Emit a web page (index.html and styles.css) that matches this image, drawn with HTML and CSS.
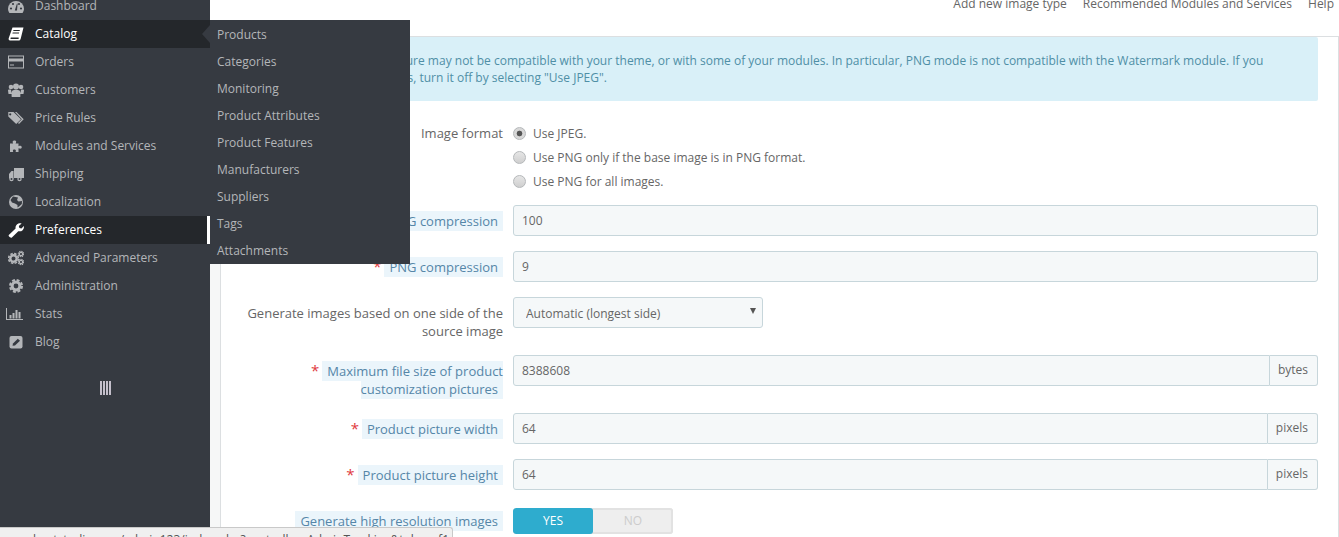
FILE: index.html
```html
<!DOCTYPE html>
<html lang="en">
<head>
<meta charset="utf-8">
<title>Image settings</title>
<link rel="stylesheet" href="styles.css">
</head>
<body>
<div class="page">
  <aside class="sidebar">
    <ul class="menu">
      <li class="item"><svg class="ico" viewBox="0 0 16 16"><path d="M0 11A8 8 0 0 1 16 11 8 8 0 0 1 14.6 15H1.4A8 8 0 0 1 0 11Z"/><g class="hole"><circle cx="3" cy="10.5" r="1.1"/><circle cx="5" cy="6" r="1.1"/><circle cx="11" cy="6" r="1.1"/><circle cx="13" cy="10.5" r="1.1"/><path d="M6.8 12.5 9 5.5 9.6 5.7 9 12.5Z"/></g></svg><span>Dashboard</span></li>
      <li class="item active catalog"><svg class="ico" viewBox="0 0 16 16"><path d="M4.5 1.5H15.5L12.8 12.2C12.5 13.6 11.8 14.5 10.5 14.5H2C.8 14.5.4 13.5.7 12.3ZM5.5 4 5.2 5H11.6L11.9 4ZM4.7 6.5 4.4 7.5H10.9L11.2 6.5ZM3 11.5C2.4 11.5 2.2 12.9 3 12.9H10.8C10.4 12.4 10.5 12 10.7 11.5Z" fill-rule="evenodd"/></svg><span>Catalog</span>
        <i class="notch"></i>
        <ul class="submenu">
          <li>Products</li><li>Categories</li><li>Monitoring</li><li>Product Attributes</li><li>Product Features</li><li>Manufacturers</li><li>Suppliers</li><li class="current">Tags</li><li>Attachments</li>
        </ul>
      </li>
      <li class="item"><svg class="ico" viewBox="0 0 16 16"><path fill-rule="evenodd" d="M0 1.5H16V14.5H0ZM1 2.5V4.5H15V2.5ZM1 7.5V13.5H15V7.5ZM2 10.5H6V11.5H2Z"/></svg><span>Orders</span></li>
      <li class="item"><svg class="ico" viewBox="0 0 16 16"><circle cx="3" cy="5" r="2.3"/><circle cx="13" cy="5" r="2.3"/><circle cx="8" cy="4.5" r="3"/><path d="M0 8.5C0 7.5 1 7.5 3 7.7L3.8 12H.5ZM16 8.5C16 7.5 15 7.5 13 7.7L12.2 12H15.5ZM4.5 8.5C6 7.6 10 7.6 11.5 8.5 12.5 9.2 12.5 12.5 12.3 15H3.7C3.5 12.5 3.5 9.2 4.5 8.5Z"/></svg><span>Customers</span></li>
      <li class="item"><svg class="ico" viewBox="0 0 16 16"><path fill-rule="evenodd" d="M.3 2H5.5L13 9.3 8.2 14 .3 6.5ZM2.2 3.2A1.1 1.1 0 1 0 2.21 3.2Z"/><path d="M7 2H8.5L15.7 9.3 11 14 10 13 13.8 9.3Z"/></svg><span>Price Rules</span></li>
      <li class="item"><svg class="ico" viewBox="0 0 16 16"><path d="M2 5.5H5.2C4.7 4.6 4.5 4 4.8 3.2 5.2 2.2 7.8 2.2 8.1 3.2 8.3 4 8 4.6 7.6 5.5H10.5V8.3C11.5 7.9 12.2 7.7 13 8 14 8.4 14 10.2 13 10.6 12.2 10.8 11.5 10.6 10.5 10.2V14H7.6C7.9 13 8.1 12.5 7.6 12 6.7 11.3 5 11.5 4.9 12.4 4.8 13 5 13.4 5.3 14H2Z"/></svg><span>Modules and Services</span></li>
      <li class="item"><svg class="ico" viewBox="0 0 16 16"><path d="M6 2H16V12H6ZM1 8 3.5 5H5.5V12.5H1Z"/><circle cx="3.5" cy="13" r="2.2"/><circle cx="11.5" cy="13" r="2.2"/><g class="hole"><circle cx="3.5" cy="13" r="1"/><circle cx="11.5" cy="13" r="1"/></g></svg><span>Shipping</span></li>
      <li class="item"><svg class="ico" viewBox="0 0 16 16"><circle cx="8" cy="8" r="7"/><path class="hole" d="M5 2.5 10 3.5 9 6 10.5 7.5 14 7 13.8 10 11 12.5 9.5 13.5 9.5 11 7 9.5 4 8.5 2.5 6Z"/></svg><span>Localization</span></li>
      <li class="item active prefs"><svg class="ico" viewBox="0 0 16 16"><path d="M.8 13 7.6 6.5C7 3.5 10 .6 13.6 1.5L10.8 4 11.4 6 13.4 6.5 15.9 4C16.5 7.6 13.4 10 10.3 9.2L3.9 15.6C3 16.5-.2 14 .8 13Z"/></svg><span>Preferences</span></li>
      <li class="item"><svg class="ico" viewBox="0 0 16 16"><g class="gear"><circle cx="5.5" cy="8.5" r="3.2" stroke-width="2.4"/><circle cx="5.5" cy="8.5" r="4.9" stroke-width="1.6" stroke-dasharray="2.5 1.35"/><circle cx="13" cy="4" r="1.7" stroke-width="1.2"/><circle cx="13" cy="4" r="2.7" stroke-width="1.2" stroke-dasharray="1.3 .82"/><circle cx="13" cy="12" r="1.7" stroke-width="1.2"/><circle cx="13" cy="12" r="2.7" stroke-width="1.2" stroke-dasharray="1.3 .82"/></g></svg><span>Advanced Parameters</span></li>
      <li class="item"><svg class="ico" viewBox="0 0 16 16"><g class="gear"><circle cx="8" cy="8" r="3.9" stroke-width="3"/><circle cx="8" cy="8" r="6" stroke-width="2" stroke-dasharray="2.9 1.81"/></g></svg><span>Administration</span></li>
      <li class="item stats"><svg class="ico" viewBox="0 0 17 16"><path d="M0 2H1V13H17V14H0ZM3.5 9H5.5V12.5H3.5ZM6.5 7H8.5V12.5H6.5ZM9.5 4H11.5V12.5H9.5ZM12.5 6H14.5V12.5H12.5Z"/></svg><span>Stats</span></li>
      <li class="item"><svg class="ico" viewBox="0 0 16 16"><rect x="1.5" y="2" width="13" height="12.5" rx="2"/><path class="hole" d="M4.5 11.8 5 9.5 9.8 4.7 12 6.8 7 11.4Z"/></svg><span>Blog</span></li>
    </ul>
    <div class="collapse-bars"></div>
  </aside>

  <main class="content">
    <nav class="toolbar">
      <a>Add new image type</a>
      <a>Recommended Modules and Services</a>
      <a>Help</a>
    </nav>
    <section class="panel">
      <div class="alert">Warning: This feature may not be compatible with your theme, or with some of your modules. In particular, PNG mode is not compatible with the Watermark module. If you encounter any issues, turn it off by selecting "Use JPEG".</div>

      <form class="form">
        <div class="row row-radios">
          <label class="label">Image format</label>
          <div class="radios">
            <label class="radio"><input type="radio" name="fmt" checked>Use JPEG.</label>
            <label class="radio"><input type="radio" name="fmt">Use PNG only if the base image is in PNG format.</label>
            <label class="radio"><input type="radio" name="fmt">Use PNG for all images.</label>
          </div>
        </div>
        <div class="row">
          <label class="label"><b class="star">*</b><span class="tip">JPEG compression</span></label>
          <input class="field" type="text" value="100">
        </div>
        <div class="row">
          <label class="label"><b class="star">*</b><span class="tip">PNG compression</span></label>
          <input class="field" type="text" value="9">
        </div>
        <div class="row">
          <label class="label">Generate images based on one side of the source image</label>
          <div class="select-wrap">
            <select class="select"><option>Automatic (longest side)</option></select>
          </div>
        </div>
        <div class="row">
          <label class="label"><b class="star">*</b><span class="tip">Maximum file size of product customization pictures</span></label>
          <div class="group">
            <input class="field" type="text" value="8388608"><span class="addon">bytes</span>
          </div>
        </div>
        <div class="row">
          <label class="label"><b class="star">*</b><span class="tip">Product picture width</span></label>
          <div class="group">
            <input class="field" type="text" value="64"><span class="addon">pixels</span>
          </div>
        </div>
        <div class="row">
          <label class="label"><b class="star">*</b><span class="tip">Product picture height</span></label>
          <div class="group">
            <input class="field" type="text" value="64"><span class="addon">pixels</span>
          </div>
        </div>
        <div class="row row-switch">
          <label class="label"><span class="tip">Generate high resolution images</span></label>
          <div class="switch"><span class="on">YES</span><span class="off">NO</span></div>
        </div>
      </form>
    </section>
  </main>

  <div class="statusbar">hoststudio.com/admin123/index.php?controller=AdminTracking&amp;token=f1d</div>
</div>
</body>
</html>
```

FILE: styles.css
```css
* { box-sizing: border-box; }
html, body { margin: 0; height: 100%; overflow: hidden; background: #fff; }
body { font-family: "Open Sans", "Liberation Sans", sans-serif; font-size: 12px; color: #666; }
ul { list-style: none; margin: 0; padding: 0; }

.page { position: relative; display: flex; width: 1339px; height: 537px; overflow: hidden; }

/* sidebar */
.sidebar { flex: 0 0 210px; height: 545px; margin-top: -8px; background: #363a41; position: relative; z-index: 3; }
.item { position: relative; display: flex; align-items: center; gap: 11px; height: 28px; padding: 0 0 1px 8px; font-size: 12px; color: #b4b6b9; }
.item.active { background: #24272b; color: #fff; }
.item.stats { padding-left: 6px; gap: 12px; }
.item.stats .ico { width: 17px; }
.ico { flex: none; width: 16px; height: 16px; fill: currentColor; }
.hole { fill: #363a41; }
.gear { fill: none; stroke: currentColor; }
.catalog .hole { fill: #24272b; }
.notch { position: absolute; right: 0; top: 5px; width: 0; height: 0; border: 9px solid transparent; border-right: 8px solid #363a41; border-left: 0; }
.prefs::after { content: ""; position: absolute; right: 0; top: 0; bottom: 0; width: 3px; background: #fff; }

.submenu { position: absolute; left: 210px; top: 0; width: 200px; height: 244px; padding-top: 1px; background: #363a41; }
.submenu li { height: 27px; line-height: 27px; padding-left: 7px; font-size: 12px; color: #b4b6b9; }

.collapse-bars { width: 11px; height: 14px; margin: 25px auto 0; background: repeating-linear-gradient(90deg, #c4bfcb 0 2px, #363a41 2px 3px); }

/* main */
.content { flex: 1; min-width: 0; }
.toolbar { display: flex; justify-content: flex-end; gap: 16px; height: 36px; padding-right: 5px; font-size: 12px; color: #666; }
.toolbar a { margin-top: -5px; line-height: 18px; height: 18px; }

.panel { margin-left: 10px; height: 520px; padding: 0 20px 0 19px; border: 1px solid #dcdfe1; background: #fff; box-shadow: -10px 0 0 #f6f7f7; }
.alert { height: 64px; padding: 15px 20px 0 55px; text-indent: 10px; background: #d9f0f8; font-size: 12px; line-height: 17px; color: #4f8fa6; border-radius: 2px; }

.form { margin-top: 16px; }
.row { display: grid; grid-template-columns: 263px 1fr; column-gap: 10px; align-items: start; margin-bottom: 15px; }
.row-radios { margin-bottom: 12px; }
.label { display: block; padding-top: 7px; text-align: right; font-size: 13px; line-height: 18px; color: #666; }
.tip { padding: 1px 5px; background: #ebf5fb; color: #5586a8; }
.star { margin-right: 3px; font-weight: 400; font-size: 15px; line-height: 1; color: #e0393e; }

.radios { padding-top: 4px; }
.radio { display: flex; align-items: center; height: 24px; font-size: 12px; color: #666; }
.radio input { appearance: none; flex: none; width: 13px; height: 13px; margin: 0 7px 0 0; border: 1px solid #b5b8ba; border-radius: 50%; background: linear-gradient(#e6e6e6, #cfcfcf); }
.radio input:checked { background: radial-gradient(circle, #555 0 2.5px, #d8d8d8 3.2px); }

.field { display: block; width: 100%; height: 31px; padding: 0 8px; border: 1px solid #c7d6db; border-radius: 3px; background: #f5f8f9; font: 12px "Open Sans", sans-serif; color: #666; }
.group { display: flex; }
.group .field { flex: 1; min-width: 0; border-radius: 3px 0 0 3px; }
.addon { flex: none; height: 31px; padding: 0 9px 0 8px; line-height: 28px; border: 1px solid #c7d6db; border-left: 0; border-radius: 0 3px 3px 0; background: #f5f8f9; font-size: 12px; color: #666; }

.select-wrap { position: relative; width: 250px; }
.select-wrap::after { content: ""; position: absolute; right: 7px; top: 11px; border: 3.5px solid transparent; border-top: 6px solid #555; border-bottom: 0; }
.select { display: block; width: 100%; height: 31px; padding: 1px 12px 0; appearance: none; border: 1px solid #c7d6db; border-radius: 3px; background: #f5f8f9; font: 12px "Open Sans", sans-serif; color: #666; }

.row-switch { padding-top: 3px; }
.row-switch .label { padding-top: 4px; }
.switch { display: flex; width: 160px; height: 26px; border-radius: 3px; overflow: hidden; background: #eee; box-shadow: inset 0 0 0 2px #e2e2e2; line-height: 26px; text-align: center; font-size: 12px; }
.on { width: 80px; background: #2eacce; color: #fff; border-radius: 3px; }
.off { width: 80px; color: #ccc; }

.statusbar { position: absolute; left: 0; bottom: 0; z-index: 5; width: 453px; height: 10px; padding: 4px 0 0 33px; overflow: hidden; white-space: nowrap; line-height: 16px; font-size: 12px; color: #555; background: #f0f0f0; border-top: 1px solid #c9c9c9; border-right: 1px solid #c9c9c9; border-top-right-radius: 3px; }
```
